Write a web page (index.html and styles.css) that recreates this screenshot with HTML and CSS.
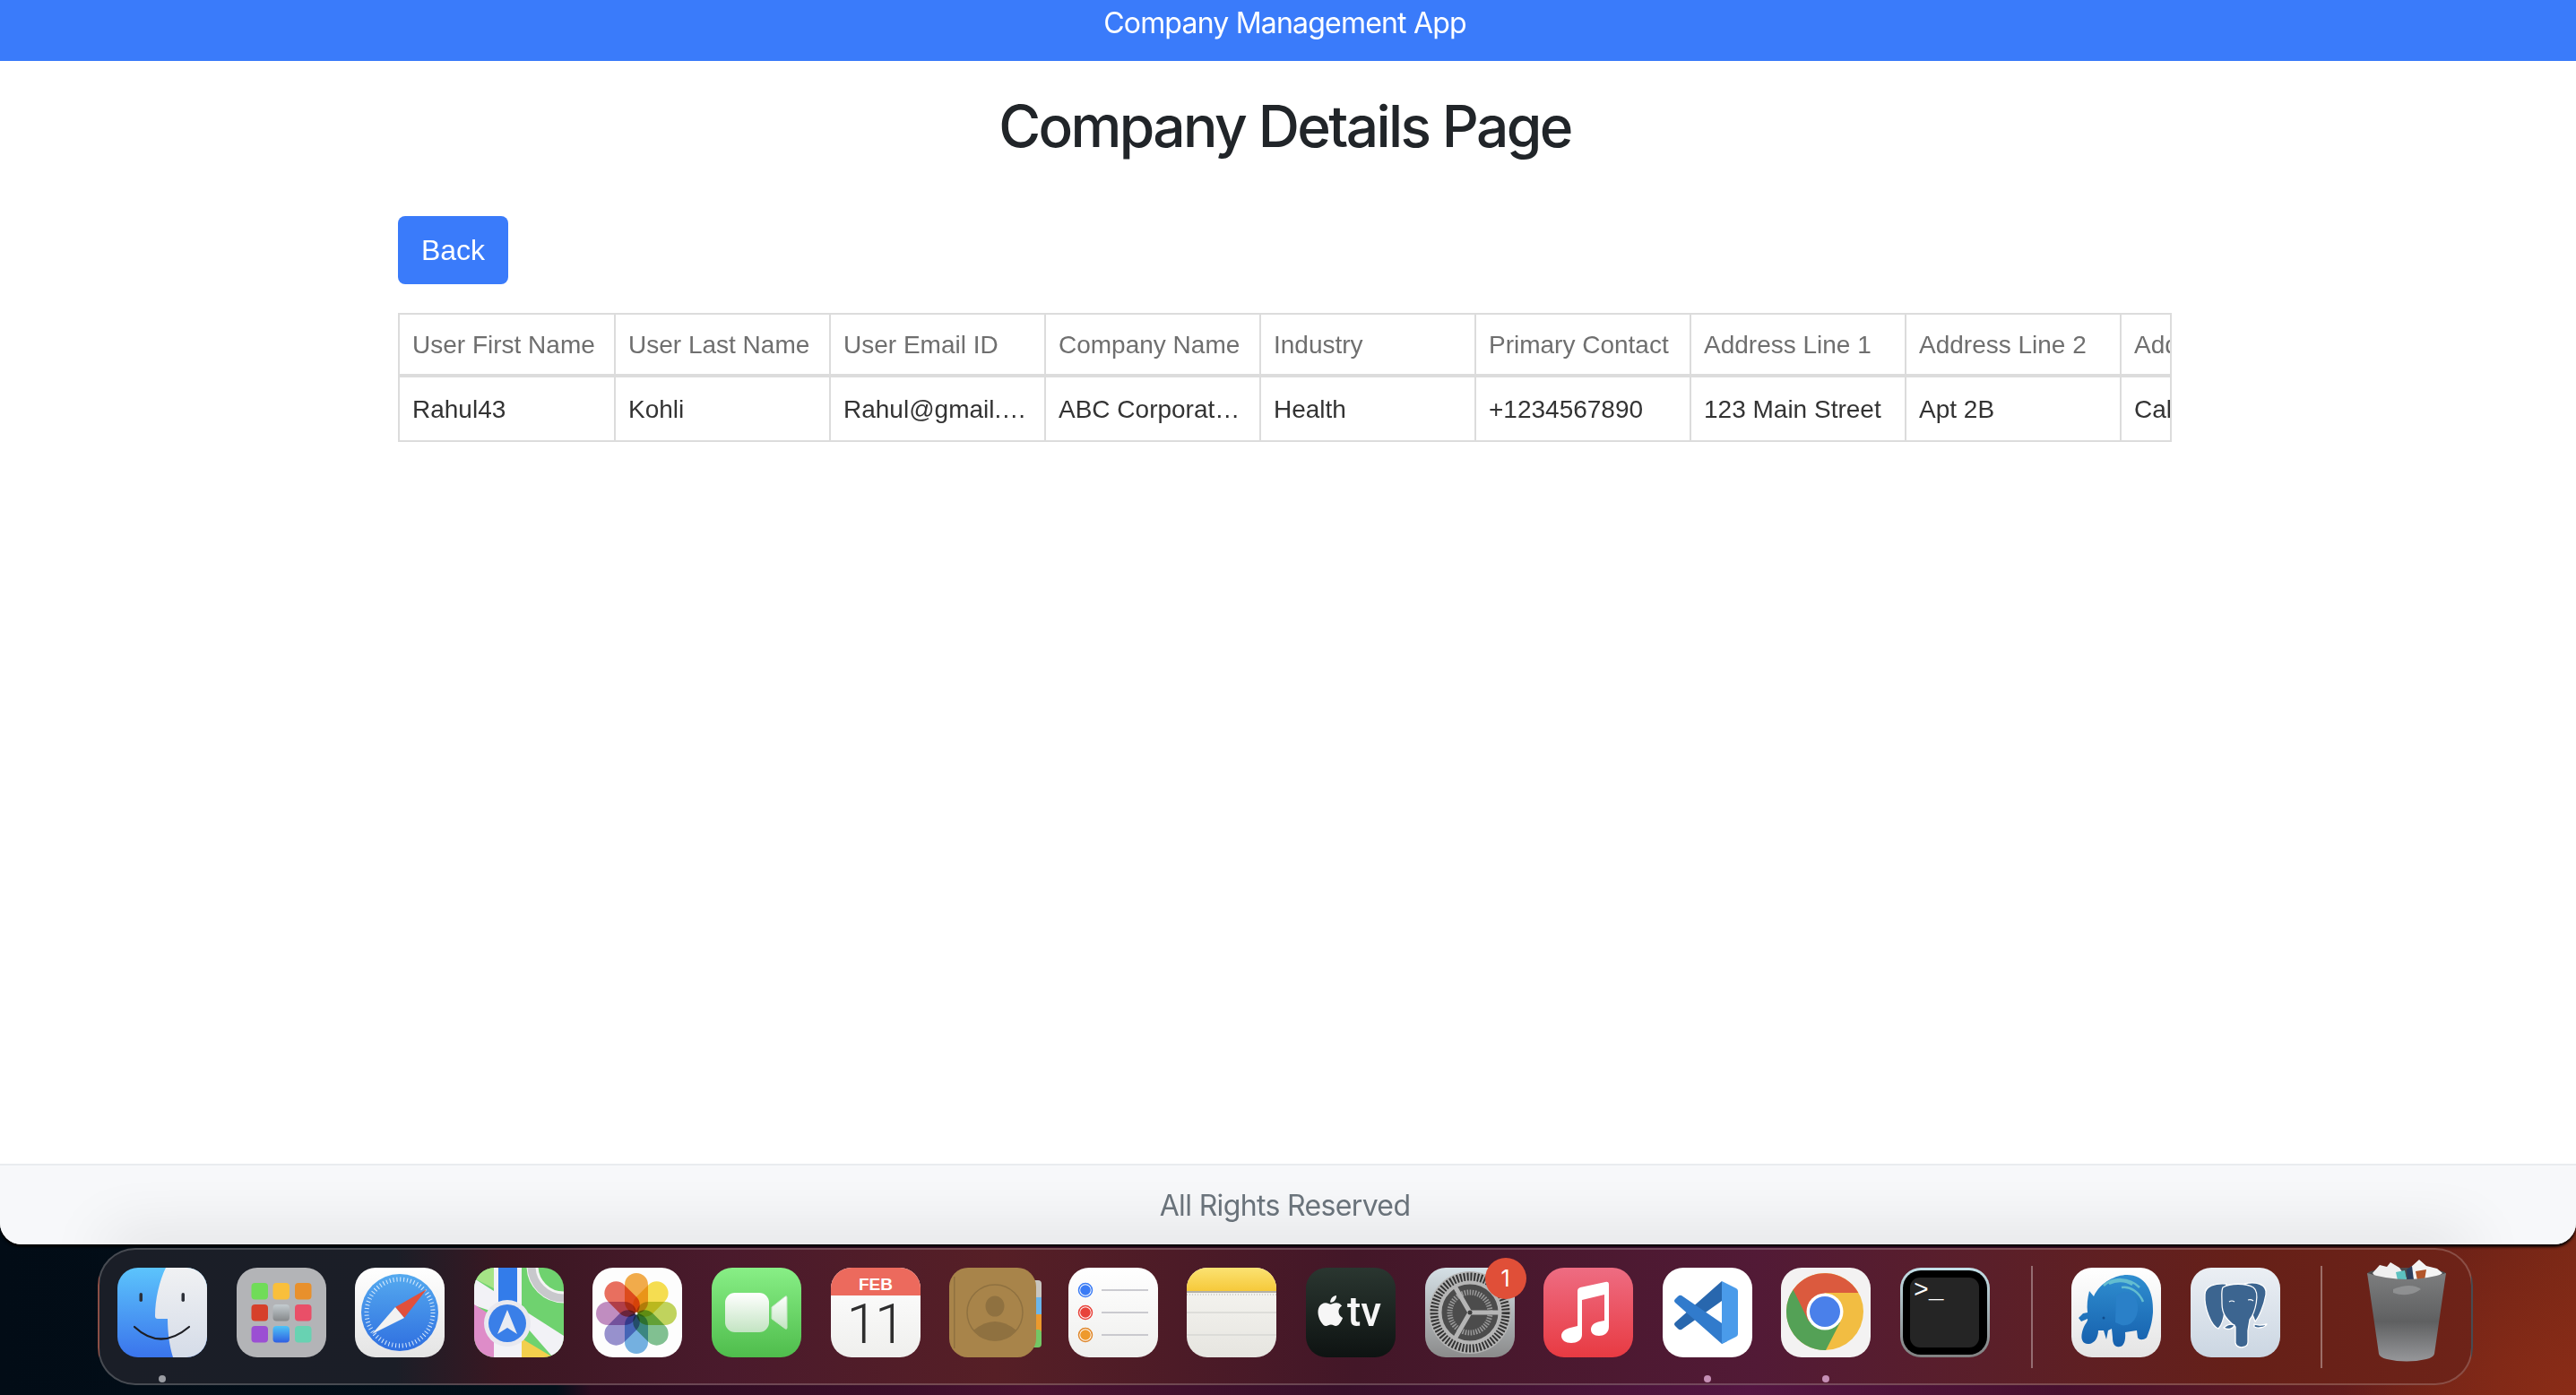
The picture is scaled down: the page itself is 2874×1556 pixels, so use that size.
FILE: index.html
```html
<!DOCTYPE html>
<html lang="en">
<head>
    <meta charset="UTF-8">
    <meta name="viewport" content="width=device-width, initial-scale=1.0">
    <title>Company Details Page</title>
    <link rel="stylesheet" href="styles.css">
</head>
<body>
    <svg class="defs" width="0" height="0">
        <defs>
            <linearGradient id="g-finder" x1="0" y1="0" x2="0" y2="1"><stop offset="0" stop-color="#5cc4fc"/><stop offset="1" stop-color="#3a74ec"/></linearGradient>
            <linearGradient id="g-finder2" x1="0" y1="0" x2="0" y2="1"><stop offset="0" stop-color="#f0f1f3"/><stop offset="1" stop-color="#d5dce8"/></linearGradient>
            <linearGradient id="g-white" x1="0" y1="0" x2="0" y2="1"><stop offset="0" stop-color="#ffffff"/><stop offset="1" stop-color="#e4e4e4"/></linearGradient>
            <linearGradient id="g-safari" x1="0" y1="0" x2="0" y2="1"><stop offset="0" stop-color="#55aaef"/><stop offset="1" stop-color="#2f6fe0"/></linearGradient>
            <linearGradient id="g-facetime" x1="0" y1="0" x2="0" y2="1"><stop offset="0" stop-color="#88ef86"/><stop offset="1" stop-color="#4fbd4c"/></linearGradient>
            <linearGradient id="g-cam" x1="0" y1="0" x2="0" y2="1"><stop offset="0" stop-color="#ffffff"/><stop offset="1" stop-color="#c3e4c2"/></linearGradient>
            <linearGradient id="g-cal" x1="0" y1="0" x2="0" y2="1"><stop offset="0" stop-color="#ffffff"/><stop offset="1" stop-color="#efefed"/></linearGradient>
            <linearGradient id="g-note" x1="0" y1="0" x2="0" y2="1"><stop offset="0" stop-color="#fbe272"/><stop offset="1" stop-color="#f6c93a"/></linearGradient>
            <linearGradient id="g-paper" x1="0" y1="0" x2="0" y2="1"><stop offset="0" stop-color="#f8f7f3"/><stop offset="1" stop-color="#e6e5e0"/></linearGradient>
            <linearGradient id="g-tv" x1="0" y1="0" x2="0" y2="1"><stop offset="0" stop-color="#2a3630"/><stop offset="1" stop-color="#0e1312"/></linearGradient>
            <linearGradient id="g-gear" x1="0" y1="0" x2="0" y2="1"><stop offset="0" stop-color="#d5e0e6"/><stop offset="1" stop-color="#8b8b8b"/></linearGradient>
            <linearGradient id="g-music" x1="0" y1="0" x2="0" y2="1"><stop offset="0" stop-color="#ee6c82"/><stop offset="1" stop-color="#e83a42"/></linearGradient>
            <linearGradient id="g-term" x1="0" y1="0" x2="0" y2="1"><stop offset="0" stop-color="#c3e0e8"/><stop offset="1" stop-color="#818181"/></linearGradient>
            <linearGradient id="g-pg" x1="0" y1="0" x2="0" y2="1"><stop offset="0" stop-color="#ebeff4"/><stop offset="1" stop-color="#cbd6e2"/></linearGradient>
            <linearGradient id="g-trash" x1="0" y1="0" x2="0" y2="1"><stop offset="0" stop-color="#7c7d7e"/><stop offset=".55" stop-color="#5f6061"/><stop offset="1" stop-color="#96979a"/></linearGradient>
            <linearGradient id="g-ele" x1="0" y1="0" x2="0" y2="1"><stop offset="0" stop-color="#2f8ed0"/><stop offset="1" stop-color="#1660ad"/></linearGradient>
            <linearGradient id="g-tile1" x1="0" y1="0" x2="0" y2="1"><stop offset="0" stop-color="#c4ccd0"/><stop offset="1" stop-color="#85888a"/></linearGradient>
            <linearGradient id="g-tile2" x1="0" y1="0" x2="0" y2="1"><stop offset="0" stop-color="#4fc4f6"/><stop offset="1" stop-color="#2f5fe2"/></linearGradient>
        </defs>
    </svg>

    <div class="window">
        <header class="app-header">Company Management App</header>

        <main class="content">
            <h1 class="page-title">Company Details Page</h1>
            <button class="back-btn" type="button">Back</button>
            <div class="table-wrap">
                <table class="details-table">
                    <thead>
                        <tr>
                            <th>User First Name</th>
                            <th>User Last Name</th>
                            <th>User Email ID</th>
                            <th>Company Name</th>
                            <th>Industry</th>
                            <th>Primary Contact</th>
                            <th>Address Line 1</th>
                            <th>Address Line 2</th>
                            <th>Address Line 3</th>
                        </tr>
                    </thead>
                    <tbody>
                        <tr>
                            <td>Rahul43</td>
                            <td>Kohli</td>
                            <td>Rahul@gmail.com</td>
                            <td>ABC Corporation</td>
                            <td>Health</td>
                            <td>+1234567890</td>
                            <td>123 Main Street</td>
                            <td>Apt 2B</td>
                            <td>California</td>
                        </tr>
                    </tbody>
                </table>
            </div>
        </main>

        <footer class="app-footer"><span>All Rights Reserved</span></footer>
    </div>

    <nav class="dock">
        <!-- finder -->
        <div class="dock-item">
            <svg class="icon" viewBox="0 0 100 100">
                <rect width="100" height="100" fill="url(#g-finder)"/>
                <path d="M54 0C47 14 42 35 42 54Q42 57 45 57L56 57C56 72 58 88 62 100L100 100L100 0Z" fill="url(#g-finder2)"/>
                <rect x="24.500" y="28" width="3.500" height="10" rx="1.750" fill="#2b2f38"/>
                <rect x="71.500" y="28" width="3.500" height="10" rx="1.750" fill="#2b2f38"/>
                <path d="M19 66Q48 93 80 66" fill="none" stroke="#1d1e24" stroke-width="2.200" stroke-linecap="round"/>
            </svg>
            <span class="dot dot-grey"></span>
        </div>
        <!-- launchpad -->
        <div class="dock-item">
            <svg class="icon" viewBox="0 0 100 100">
                <rect width="100" height="100" fill="#b3b4b7"/>
                <rect x="16.500" y="17" width="18.500" height="18.500" rx="4" fill="#70dc58"/>
                <rect x="40.500" y="17" width="18.500" height="18.500" rx="4" fill="#f9bf3b"/>
                <rect x="65" y="17" width="18.500" height="18.500" rx="4" fill="#e8902c"/>
                <rect x="16.500" y="41" width="18.500" height="18.500" rx="4" fill="#d6402a"/>
                <rect x="40.500" y="41" width="18.500" height="18.500" rx="4" fill="url(#g-tile1)"/>
                <rect x="65" y="41" width="18.500" height="18.500" rx="4" fill="#e94f68"/>
                <rect x="16.500" y="65" width="18.500" height="18.500" rx="4" fill="#9b4fd3"/>
                <rect x="40.500" y="65" width="18.500" height="18.500" rx="4" fill="url(#g-tile2)"/>
                <rect x="65" y="65" width="18.500" height="18.500" rx="4" fill="#68d2b2"/>
            </svg>
        </div>
        <!-- safari -->
        <div class="dock-item">
            <svg class="icon" viewBox="0 0 100 100">
                <rect width="100" height="100" fill="url(#g-white)"/>
                <circle cx="50" cy="50" r="43" fill="url(#g-safari)"/>
                <circle cx="50" cy="50" r="37" fill="none" stroke="#dcecfb" stroke-width="5" stroke-dasharray="1 2.875"/>
                <path d="M80 24L55 56L45 44Z" fill="#e0503c"/>
                <path d="M19 74L45 44L55 56Z" fill="#f2f2f2"/>
            </svg>
        </div>
        <!-- maps -->
        <div class="dock-item">
            <svg class="icon" viewBox="0 0 100 100">
                <rect width="100" height="100" fill="#6fd26f"/>
                <path d="M0 0H24V24L0 12Z" fill="#a5e486"/>
                <path d="M0 12L100 76V100H88L53 60L0 42Z" fill="#f2f2f6"/>
                <path d="M0 41L22 55V100H0Z" fill="#de8cc8"/>
                <path d="M22 0H53V100H22Z" fill="#f2f2f6"/>
                <rect x="27" width="21" height="42" fill="#337cea"/>
                <path d="M53 79L88 100H53Z" fill="#f3cf4d"/>
                <circle cx="100" cy="-2" r="35" fill="none" stroke="#f4f4f4" stroke-width="13"/>
                <circle cx="100" cy="-2" r="36" fill="none" stroke="#c8c8cc" stroke-width="9"/>
                <circle cx="37" cy="62" r="26" fill="#e9e9ef"/>
                <circle cx="37" cy="62" r="21" fill="#3a7fe8"/>
                <path d="M37 47L48 74L37 67L26 74Z" fill="#e8ecf3"/>
            </svg>
        </div>
        <!-- photos -->
        <div class="dock-item">
            <svg class="icon" viewBox="0 0 100 100">
                <rect width="100" height="100" fill="#fdfdfd"/>
                <g transform="translate(49 51)">
                    <rect class="petal" x="-13" y="-45" width="26" height="45" rx="13" fill="#f2a437"/>
                    <rect class="petal" x="-13" y="-45" width="26" height="45" rx="13" fill="#f6dc3e" transform="rotate(45)"/>
                    <rect class="petal" x="-13" y="-45" width="26" height="45" rx="13" fill="#bcd14c" transform="rotate(90)"/>
                    <rect class="petal" x="-13" y="-45" width="26" height="45" rx="13" fill="#74bb86" transform="rotate(135)"/>
                    <rect class="petal" x="-13" y="-45" width="26" height="45" rx="13" fill="#66aadf" transform="rotate(180)"/>
                    <rect class="petal" x="-13" y="-45" width="26" height="45" rx="13" fill="#8d86ca" transform="rotate(225)"/>
                    <rect class="petal" x="-13" y="-45" width="26" height="45" rx="13" fill="#bb82bb" transform="rotate(270)"/>
                    <rect class="petal" x="-13" y="-45" width="26" height="45" rx="13" fill="#e8604f" transform="rotate(315)"/>
                    <circle r="1.500" fill="#fff"/>
                </g>
            </svg>
        </div>
        <!-- facetime -->
        <div class="dock-item">
            <svg class="icon" viewBox="0 0 100 100">
                <rect width="100" height="100" fill="url(#g-facetime)"/>
                <rect x="15" y="28" width="49" height="44" rx="11" fill="url(#g-cam)"/>
                <path d="M67 44L82 32Q84 31 84 33V67Q84 69 82 68L67 57Z" fill="url(#g-cam)" stroke="#c3e4c2" stroke-linejoin="round"/>
            </svg>
        </div>
        <!-- calendar -->
        <div class="dock-item">
            <svg class="icon" viewBox="0 0 100 100">
                <rect width="100" height="100" fill="url(#g-cal)"/>
                <rect width="100" height="31" fill="#ec6a5d"/>
                <text class="cal-month" x="50" y="24.500" text-anchor="middle">FEB</text>
                <text class="cal-day" x="49" y="84" text-anchor="middle">11</text>
            </svg>
        </div>
        <!-- contacts -->
        <div class="dock-item">
            <svg class="icon-free" viewBox="0 0 100 100">
                <rect x="90" y="14" width="13" height="22" rx="4" fill="#c9c6c0"/>
                <rect x="90" y="33" width="13" height="20" fill="#6cb6ea"/>
                <rect x="90" y="52" width="13" height="20" fill="#ec9a2d"/>
                <rect x="90" y="69" width="13" height="20" rx="4" fill="#74c765"/>
                <rect width="97" height="100" rx="21" fill="#a8844a"/>
                <rect x="5" y="10" width="1.500" height="80" fill="#8f7140"/>
                <circle cx="51" cy="50" r="31" fill="none" stroke="#8f7140" stroke-width="1.500"/>
                <ellipse cx="51" cy="43" rx="10.500" ry="11.500" fill="#8f7140"/>
                <path d="M27 70Q51 50 75 70A31 31 0 0 1 27 70Z" fill="#8f7140"/>
            </svg>
        </div>
        <!-- reminders -->
        <div class="dock-item">
            <svg class="icon" viewBox="0 0 100 100">
                <rect width="100" height="100" fill="url(#g-cal)"/>
                <circle cx="19" cy="25" r="7.500" fill="#fff" stroke="#3a7bf5" stroke-width="1.500"/><circle cx="19" cy="25" r="5.800" fill="#3a7bf5"/>
                <circle cx="19" cy="50" r="7.500" fill="#fff" stroke="#e8423a" stroke-width="1.500"/><circle cx="19" cy="50" r="5.800" fill="#e8423a"/>
                <circle cx="19" cy="75" r="7.500" fill="#fff" stroke="#e0872a" stroke-width="1.500"/><circle cx="19" cy="75" r="5.800" fill="#ee9a2d"/>
                <path d="M37 25H89M37 50H89M37 75H89" stroke="#bcbcc2" stroke-width="1.500"/>
            </svg>
        </div>
        <!-- notes -->
        <div class="dock-item">
            <svg class="icon" viewBox="0 0 100 100">
                <rect width="100" height="100" fill="url(#g-paper)"/>
                <rect width="100" height="26" fill="url(#g-note)"/>
                <rect y="26" width="100" height="2" fill="#b3b0a6"/>
                <path d="M0 30H100" stroke="#c9c8c3" stroke-width="1.500" stroke-dasharray="1 2"/>
                <path d="M0 50H100M0 75H100" stroke="#d8d7d3" stroke-width="1.500"/>
            </svg>
        </div>
        <!-- apple tv -->
        <div class="dock-item">
            <svg class="icon" viewBox="0 0 100 100">
                <rect width="100" height="100" fill="url(#g-tv)"/>
                <path transform="translate(6.900 27.600) scale(1.700)" fill="#f6f6f6" d="M18.71 19.5c-.83 1.24-1.71 2.45-3.05 2.47-1.34.03-1.77-.79-3.29-.79-1.53 0-2 .77-3.27.82-1.31.05-2.3-1.32-3.14-2.53C4.25 17 2.94 12.45 4.7 9.39c.87-1.52 2.43-2.48 4.12-2.51 1.28-.02 2.5.87 3.29.87.78 0 2.26-1.07 3.81-.91.65.03 2.47.26 3.64 1.98-.09.06-2.17 1.28-2.15 3.81.03 3.02 2.65 4.03 2.68 4.04-.03.07-.42 1.44-1.38 2.83M13 3.5c.73-.83 1.94-1.46 2.94-1.5.13 1.17-.34 2.35-1.04 3.19-.69.85-1.83 1.51-2.95 1.42-.15-1.15.41-2.35 1.05-3.11z"/>
                <text class="tv-text" x="46" y="65">tv</text>
            </svg>
        </div>
        <!-- system preferences -->
        <div class="dock-item">
            <svg class="icon" viewBox="0 0 100 100">
                <rect width="100" height="100" fill="url(#g-gear)"/>
                <circle cx="50" cy="50" r="46" fill="#b5b5b5"/>
                <circle cx="50" cy="50" r="40" fill="none" stroke="#333" stroke-width="9" stroke-dasharray="2 1.850"/>
                <circle cx="50" cy="50" r="33" fill="#4c4c4c" stroke="#b5b5b5" stroke-width="3"/>
                <circle cx="50" cy="50" r="22.500" fill="none" stroke="#9a9a9a" stroke-width="6" stroke-dasharray="1.500 1.500"/>
                <path d="M50 50L83 50M50 50L33.500 78.600M50 50L33.500 21.400" stroke="#b5b5b5" stroke-width="5"/>
                <circle cx="50" cy="50" r="2.500" fill="#3c3c3c"/>
            </svg>
            <span class="badge">1</span>
        </div>
        <!-- music -->
        <div class="dock-item">
            <svg class="icon" viewBox="0 0 100 100">
                <rect width="100" height="100" fill="url(#g-music)"/>
                <path fill="#fff" d="M38 26Q38 23 41 22L69 16Q73 15 73 19V66C73 73 67 76 62 76C56 76 53 73 53 69C53 64 57 61 63 60L68 59V30L43 36V75C43 81 37 84 31 84C25 84 20 81 20 76C20 71 25 68 30 67L38 65Z"/>
            </svg>
        </div>
        <!-- vs code -->
        <div class="dock-item">
            <svg class="icon" viewBox="0 0 100 100">
                <rect width="100" height="100" fill="#fff"/>
                <path d="M66 15V37L21 69Q19 70 17 68L14 65Q12 63 14 61Z" fill="#2867ae"/>
                <path d="M21 31Q19 30 17 32L14 35Q12 37 14 39L66 85L72 82V66Z" fill="#317bcc"/>
                <path d="M66 15L82 23Q84 24 84 26V74Q84 76 82 77L66 85Z" fill="#4a9bea"/>
            </svg>
            <span class="dot"></span>
        </div>
        <!-- chrome -->
        <div class="dock-item">
            <svg class="icon" viewBox="0 0 100 100">
                <rect width="100" height="100" fill="#f3f2f2"/>
                <circle cx="49" cy="49" r="43" fill="#f2bd42"/>
                <path d="M13.600 24.600A43 43 0 0 0 50 92L66 61L40 60Z" fill="#54a156"/>
                <path d="M49 28H86.300A43 43 0 0 0 13.600 24.600L31 60Z" fill="#db5a3e"/>
                <circle cx="49" cy="49" r="20.500" fill="#fff"/>
                <circle cx="49" cy="49" r="17" fill="#4a80ea"/>
            </svg>
            <span class="dot"></span>
        </div>
        <!-- terminal -->
        <div class="dock-item">
            <svg class="icon" viewBox="0 0 100 100">
                <rect width="100" height="100" fill="url(#g-term)"/>
                <rect x="3" y="3" width="94" height="94" rx="20" fill="#000"/>
                <rect x="11" y="11" width="77" height="78" rx="11" fill="#252525"/>
                <text class="term-text" x="15" y="33">&gt;_</text>
            </svg>
        </div>

        <div class="dock-sep"></div>

        <!-- elephant -->
        <div class="dock-item">
            <svg class="icon" viewBox="0 0 100 100">
                <rect width="100" height="100" fill="url(#g-white)"/>
                <path fill="url(#g-ele)" d="M20 26L25 32C32 16 50 8 62 8C82 8 92 25 91 50C90 62 88 68 84 78C80 81 76 81 74 78L73 70L60 72C61 82 58 88 54 88C49 89 46 86 46 78L45 68L41 70L39 80L36 70L30 70C30 78 26 84 20 85C13 86 10 80 12 72C14 63 19 60 18 57L11 60L8 56L13 51L18 50C17 42 18 34 20 26Z"/>
                <path fill="#2a80c8" d="M50 32C60 22 72 28 74 42C75 55 68 66 56 64L49 61Z"/>
                <path d="M36 20C46 11 64 10 76 22M56 22C66 20 76 28 80 38M42 18C50 14 60 14 68 19" fill="none" stroke="#63bdd0" stroke-width="2.500"/>
                <circle cx="36" cy="56" r="1.500" fill="#0f4d8e"/>
            </svg>
        </div>
        <!-- postgres -->
        <div class="dock-item">
            <svg class="icon" viewBox="0 0 100 100">
                <rect width="100" height="100" fill="url(#g-pg)"/>
                <g fill="#3c6590" stroke="#fff" stroke-width="1.300" stroke-linejoin="round">
                    <path d="M16 30C16 20 28 17 40 18L38 48C37 58 35 64 31 68C23 65 15 45 16 30Z"/>
                    <path d="M60 18C72 15 86 18 84 30C82 42 76 56 72 60L68 50C70 40 68 25 60 18Z"/>
                    <path d="M36 22C44 17 62 17 70 22C78 28 72 50 66 58L64 70V83C64 90 52 91 50 84V66C44 60 35 55 35 40C35 30 34 26 36 22Z"/>
                    <path d="M37 67C42 62 47 63 49 64C48 68 42 70 37 67Z"/>
                    <path d="M71 63C76 65 81 64 85 63C83 67 75 68 71 66Z"/>
                </g>
                <path d="M43 38Q46 36 49 38M64 36Q67 35 70 37" fill="none" stroke="#fff" stroke-width="1.200"/>
            </svg>
        </div>

        <div class="dock-sep"></div>

        <!-- trash -->
        <div class="dock-item">
            <svg class="icon-free" viewBox="0 0 100 100">
                <ellipse cx="50" cy="7" rx="44" ry="7" fill="#4b4c4e"/>
                <path d="M12 6L20 -3L28 -1L32 -6L42 0L50 12L40 15L26 13L16 11Z" fill="#efefef"/>
                <path d="M54 0L64 -9L72 -2L84 1L90 6L82 12L72 15L58 14Z" fill="#f4f4f4"/>
                <path d="M38 5L48 3L50 13L40 14Z" fill="#5cc2c0"/>
                <path d="M60 4L72 2L70 14L62 14Z" fill="#b2562a"/>
                <path d="M50 2L56 -2L58 14L51 14Z" fill="#2c3e5c"/>
                <path d="M6 6Q50 20 94 6L81 96Q80 100 72 102Q50 107 28 102Q20 100 19 96Z" fill="url(#g-trash)"/>
                <path d="M35 24Q55 16 66 24Q52 34 35 28Z" fill="#9b9c9e" opacity=".7"/>
            </svg>
        </div>
    </nav>
</body>
</html>
```

FILE: styles.css
```css
html, body {
    height: 100%;
}
body {
    margin: 0;
    height: 1556px;
    overflow: hidden;
    display: flex;
    flex-direction: column;
    font-family: Inter, "Liberation Sans", sans-serif;
    background:
        radial-gradient(ellipse 260px 190px at 2874px 1556px, #8a2c17 0%, rgba(138,44,23,0) 100%),
        linear-gradient(90deg, #020c16 0, #03101a 620px, #2c0c20 660px, #3c0f2a 1000px, #4a1230 1150px, #38102a 1500px, #541642 1950px, #47102e 2300px, #6a2018 2700px, #7a2816 2874px);
}
.defs {
    position: absolute;
}

.window {
    height: 1388px;
    flex: none;
    display: flex;
    flex-direction: column;
    background-color: #fff;
    border-radius: 0 0 24px 24px;
    overflow: hidden;
    box-shadow: 0 3px 3px rgba(0,0,0,0.9);
}
.app-header {
    height: 68px;
    box-sizing: border-box;
    padding: 2px 7px 0 0;
    background-color: #3a7bfa;
    color: #fff;
    font-size: 32px;
    line-height: 48px;
    letter-spacing: -0.8px;
    text-align: center;
}
.content {
    flex: 1;
    box-sizing: border-box;
    padding-right: 7px;
}
.page-title {
    margin: 34px 0 62px;
    font-size: 64px;
    font-weight: 500;
    line-height: 77px;
    letter-spacing: -2.6px;
    text-align: center;
    color: #212529;
}
.back-btn {
    display: block;
    width: 123px;
    height: 76px;
    margin: 0 0 32px 444px;
    padding: 0;
    border: 0;
    border-radius: 8px;
    background-color: #3a7bfa;
    color: #fff;
    font-family: "Liberation Sans", Arial, sans-serif;
    font-size: 32px;
}
.table-wrap {
    width: 1979px;
    box-sizing: border-box;
    margin-left: 444px;
    border: 2px solid #dcdcdc;
    overflow: hidden;
}
.details-table {
    width: 2161px;
    table-layout: fixed;
    border-collapse: separate;
    border-spacing: 0;
    font-family: "Liberation Sans", Arial, sans-serif;
    font-size: 28px;
}
.details-table th,
.details-table td {
    box-sizing: border-box;
    width: 240px;
    height: 70px;
    padding: 2px 16px 0 14px;
    border-right: 2px solid #dcdcdc;
    white-space: nowrap;
    overflow: hidden;
    text-overflow: ellipsis;
    text-align: left;
}
.details-table th:first-child,
.details-table td:first-child {
    width: 241px;
}
.details-table th {
    border-bottom: 4px solid #dcdcdc;
    font-weight: normal;
    color: #6f6f6f;
}
.details-table td {
    color: #333;
}
.app-footer {
    position: relative;
    overflow: hidden;
    padding: 21px 7px 19px 0;
    border-top: 2px solid #e9ecef;
    background-color: #f7f8fa;
    font-size: 32px;
    line-height: 48px;
    letter-spacing: -0.65px;
    text-align: center;
    color: #6c757d;
}
.app-footer span {
    position: relative;
}
/* shadow the dock throws up onto the window */
.app-footer::after {
    content: "";
    position: absolute;
    left: 120px;
    right: 120px;
    bottom: -20px;
    height: 20px;
    box-shadow: 0 0 70px rgba(0,0,0,0.24);
}

.dock {
    display: flex;
    align-items: flex-start;
    gap: 32.600px;
    width: 2650px;
    height: 153px;
    box-sizing: border-box;
    margin: 4px 0 0 109px;
    padding: 20px;
    border: 2px solid rgba(255,255,255,0.2);
    border-radius: 42px;
    background: linear-gradient(90deg, #1a1e27 0, #1b1e27 330px, #3a1722 450px, #4a1a2c 700px, #561f26 1000px, #431728 1400px, #521a36 1850px, #5a1f2a 2100px, #662018 2400px, #6e2318 2650px);
}
.dock-item {
    position: relative;
    width: 100px;
    height: 100px;
    flex: none;
}
.icon,
.icon-free {
    display: block;
    width: 100px;
    height: 100px;
}
.icon {
    border-radius: 23px;
}
.icon-free {
    overflow: visible;
}
.dock-sep {
    flex: none;
    width: 2px;
    height: 114px;
    margin: -2px 11px 0 13px;
    background-color: rgba(255,255,255,0.35);
}
.dot {
    position: absolute;
    left: 46px;
    top: 120px;
    width: 8px;
    height: 8px;
    border-radius: 50%;
    background-color: #c58fb5;
}
.dot-grey {
    background-color: #9a9ca2;
}
.badge {
    position: absolute;
    left: 67px;
    top: -11px;
    width: 46px;
    height: 46px;
    border-radius: 50%;
    background-color: #e04f38;
    color: #fff;
    font-size: 25px;
    line-height: 46px;
    text-align: center;
}
.petal {
    mix-blend-mode: multiply;
    opacity: 0.9;
}
.cal-month {
    font-family: "Liberation Sans", sans-serif;
    font-weight: bold;
    font-size: 19px;
    fill: #fff;
}
.cal-day {
    font-family: Roboto, sans-serif;
    font-weight: 300;
    font-size: 62px;
    letter-spacing: -3px;
    fill: #2e2e2e;
}
.tv-text {
    font-family: Roboto, sans-serif;
    font-weight: 500;
    font-size: 46px;
    fill: #f6f6f6;
}
.term-text {
    font-family: "Liberation Mono", monospace;
    font-size: 28px;
    fill: #fff;
}
```
